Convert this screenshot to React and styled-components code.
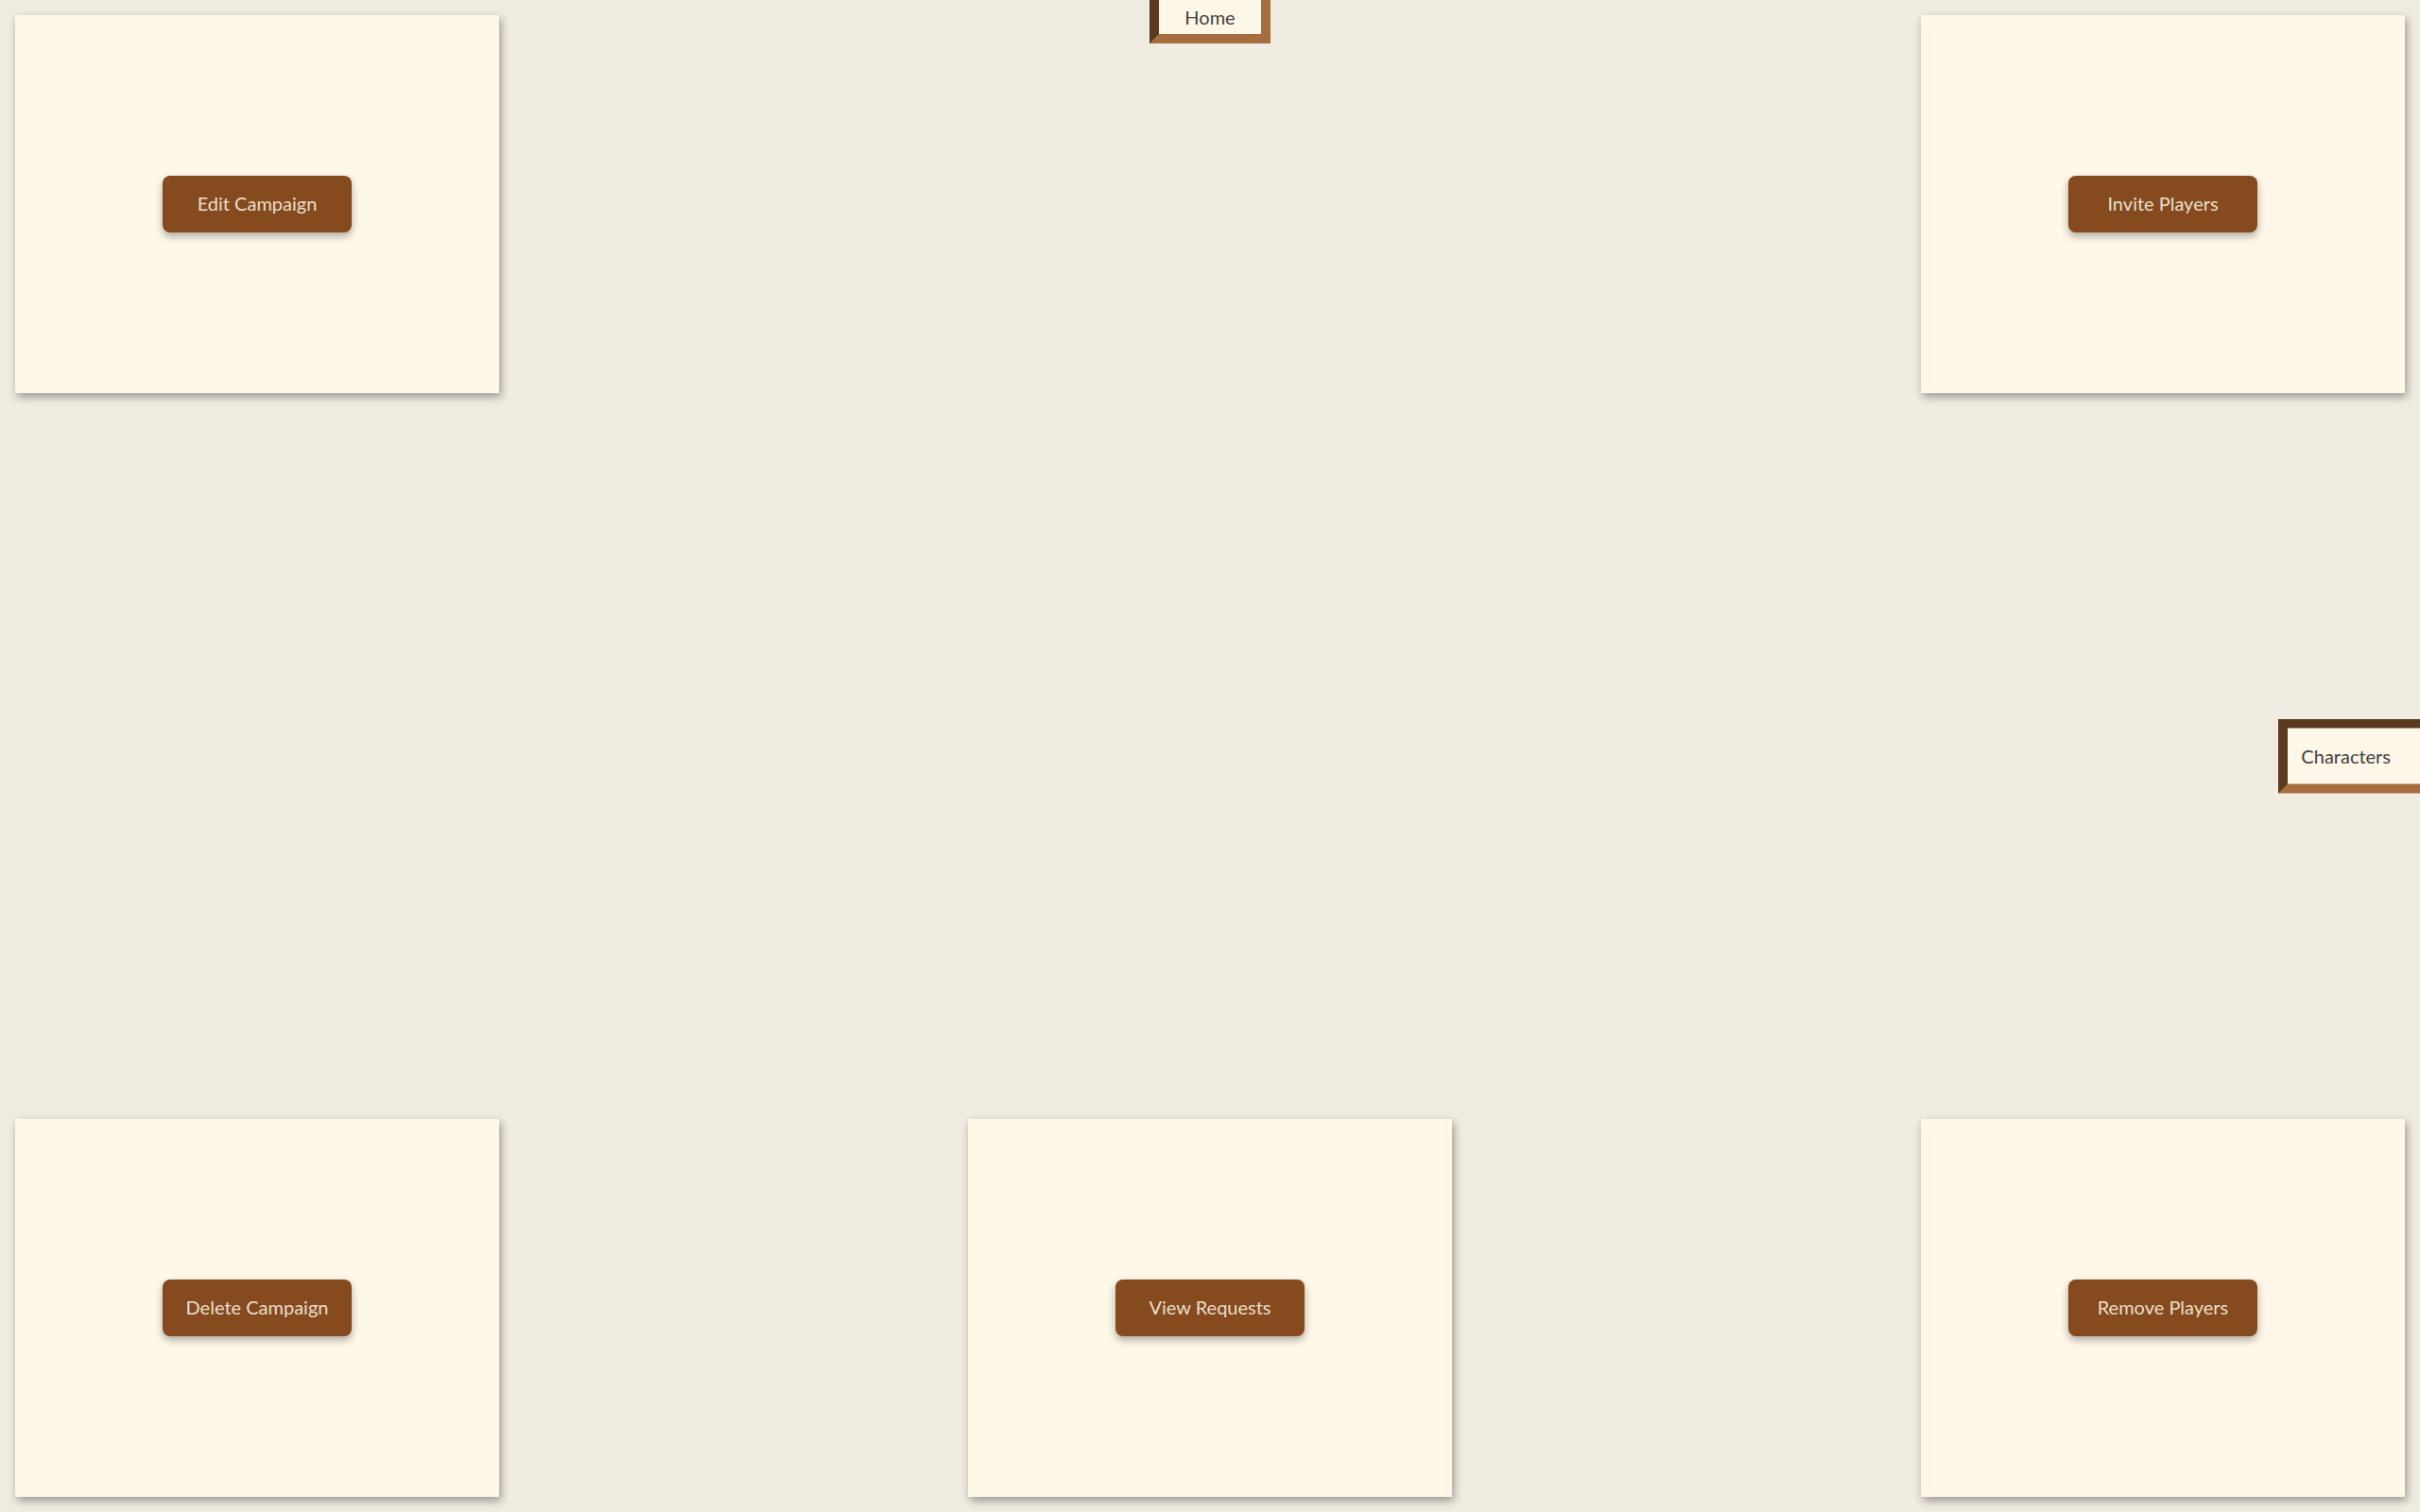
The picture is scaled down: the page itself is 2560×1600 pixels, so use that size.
import styled, { createGlobalStyle } from "styled-components";

const GlobalStyle = createGlobalStyle`
  html, body {
    margin: 0;
    padding: 0;
    background: #f0ece2;
    font-family: Lato, "Noto Sans", sans-serif;
    overflow: hidden;
  }
  * {
    box-sizing: border-box;
  }
`;

const cards = [
  { label: "Edit Campaign", row: 1, col: 1 },
  { label: "Invite Players", row: 1, col: 3 },
  { label: "Delete Campaign", row: 3, col: 1 },
  { label: "View Requests", row: 3, col: 2 },
  { label: "Remove Players", row: 3, col: 3 },
];

const App = () => {
  return (
    <>
      <GlobalStyle />
      <Page>
        {cards.map((card) => (
          <Card key={card.label} $row={card.row} $col={card.col}>
            <ActionButton>{card.label}</ActionButton>
          </Card>
        ))}
      </Page>
      <HomeTab href="#">Home</HomeTab>
      <CharactersTab href="#">Characters</CharactersTab>
    </>
  );
};

const Page = styled.main`
  width: 100vw;
  height: 100vh;
  padding: 16px;
  display: grid;
  grid-template-columns: repeat(3, 512px);
  grid-template-rows: 400px 1fr 400px;
  justify-content: space-between;
`;

const Card = styled.section`
  grid-row: ${({ $row }) => $row};
  grid-column: ${({ $col }) => $col};
  background: #fff7e8;
  box-shadow: 2px 4px 9px rgba(0, 0, 0, 0.36);
  display: flex;
  align-items: center;
  justify-content: center;
`;

const ActionButton = styled.button`
  width: 200px;
  height: 60px;
  padding: 0 0 3px;
  border: none;
  border-radius: 8px;
  background: #854a1e;
  color: #e9dfcd;
  font-family: Lato, "Noto Sans", sans-serif;
  font-size: 20px;
  box-shadow: 0 4px 8px rgba(0, 0, 0, 0.32);
  cursor: pointer;
  &:hover {
    background: #6f3d18;
  }
`;

const Tab = styled.a`
  position: fixed;
  display: block;
  background: #fff7e8;
  color: #45423e;
  font-size: 20px;
  line-height: 24px;
  text-decoration: none;
  border-style: solid;
  border-width: 10px;
  border-color: #5c3a21 #a86d3f #a86d3f #5c3a21;
`;

const HomeTab = styled(Tab)`
  top: -10px;
  left: 50%;
  transform: translateX(-50%);
  width: 128px;
  padding: 6px 0 6px;
  text-align: center;
`;

const CharactersTab = styled(Tab)`
  top: 50%;
  right: -20px;
  transform: translateY(-50%);
  padding: 17px 41px 18px 14px;
`;

export default App;
